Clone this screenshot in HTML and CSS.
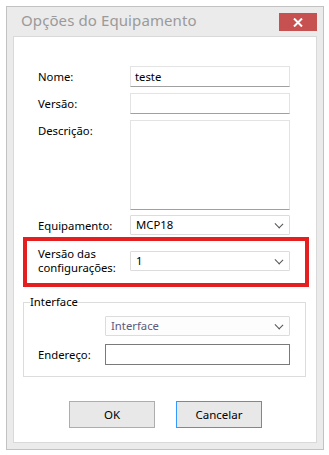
FILE: index.html
```html
<!doctype html>
<html lang="pt">
<head>
<meta charset="utf-8" />
<title>Opções do Equipamento</title>
<link rel="stylesheet" href="styles.css">
</head>
<body>
  <div class="window">
    <div class="titlebar">
      <span class="title">Opções do Equipamento</span>
      <button class="close" aria-label="Fechar">
        <svg width="10" height="9" viewBox="0 0 10 9"><path d="M1 0.5 L9 8.5 M9 0.5 L1 8.5" stroke="#fff" stroke-width="2"/></svg>
      </button>
    </div>

    <div class="client">
      <!-- campos principais -->
      <div class="form">
        <label class="lbl">Nome:</label>
        <div class="field">teste</div>

        <label class="lbl">Versão:</label>
        <div class="field"></div>

        <label class="lbl lbl-top">Descrição:</label>
        <div class="field area"></div>

        <label class="lbl">Equipamento:</label>
        <div class="combo">MCP18<i class="chev"></i></div>
      </div>

      <!-- destaque -->
      <div class="highlight">
        <label class="lbl two">Versão das<br>configurações:</label>
        <div class="combo">1<i class="chev"></i></div>
      </div>

      <!-- grupo interface -->
      <fieldset class="group">
        <legend>Interface</legend>
        <div class="group-row">
          <span></span>
          <div class="combo muted">Interface<i class="chev"></i></div>
        </div>
        <div class="group-row">
          <label class="lbl">Endereço:</label>
          <div class="field dark"></div>
        </div>
      </fieldset>

      <div class="buttons">
        <button class="btn">OK</button>
        <button class="btn default">Cancelar</button>
      </div>
    </div>
  </div>
</body>
</html>
```

FILE: styles.css
```css
*{box-sizing:border-box}
body{
  margin:0;background:#fff;
  font-family:"Noto Sans","Open Sans",sans-serif;font-size:11.3px;color:#000;
}

/* === janela === */
.window{
  margin:6px 0 0 6px;width:318px;height:444px;
  background:#ebebeb;border:1px solid #c2c2c2;
  padding:0 6px 6px 6px;
  display:flex;flex-direction:column;
}
.titlebar{
  height:29px;display:flex;align-items:flex-start;justify-content:space-between;
}
.title{
  margin:3px 0 0 8px;font-size:15px;color:#9a9a9a;letter-spacing:.1px;
}
.close{
  margin-top:6px;width:38px;height:18px;border:0;padding:0;
  background:#c75050;display:flex;align-items:center;justify-content:center;
}
.client{
  flex:1;background:#fff;border:1px solid #d9d9d9;
  padding-top:29px;
}

/* === formulário === */
.form{
  display:grid;grid-template-columns:92px 160px;
  row-gap:6px;padding-left:24px;
}
.lbl{display:flex;align-items:center;line-height:14px;}
.lbl-top{align-items:flex-start;padding-top:4px;}
.field{
  height:21px;border:1px solid #e3e3e3;border-bottom-color:#a0a0a0;
  padding:0 0 0 4px;line-height:19px;
}
.area{height:90px;}
.dark{border-color:#7a7a7a;}
.combo{
  position:relative;height:20px;border:1px solid #dcdcdc;border-radius:1px;
  background:#fff;padding-left:5px;line-height:18px;
}
.form .combo{margin-top:-1px;}
.muted{color:#5e5a7c;background:#fdfdfd;}
.chev{
  position:absolute;right:7px;top:5px;width:6px;height:6px;
  border-right:1px solid #555;border-bottom:1px solid #555;
  transform:rotate(45deg) scaleX(1.1);
}

/* === destaque vermelho === */
.highlight{
  margin:2px 0 0 9px;width:286px;height:50px;
  border:4px solid #e51f1f;
  display:grid;grid-template-columns:92px 160px;
  padding:10px 0 0 11px;
}
.highlight .lbl{display:block;margin-top:-4px;line-height:14px;}

/* === grupo === */
fieldset.group{
  margin:8px 0 0 9px;width:283px;height:82px;
  border:1px solid #dcdcdc;padding:7px 0 0 14px;
}
.group legend{padding:0;margin-left:-8px;line-height:14px;}
.group-row{display:grid;grid-template-columns:67px 185px;align-items:center;height:20px;}
.group-row + .group-row{margin-top:8px;}
.group .field{height:21px;}

/* === botões === */
.buttons{display:flex;gap:21px;margin:24px 0 0 55px;}
.btn{
  width:86px;height:27px;border:1px solid #adadad;background:#e8e8e8;
  font-family:inherit;font-size:11.5px;color:#000;padding:0;
}
.btn.default{border-color:#3399ff;}
```
